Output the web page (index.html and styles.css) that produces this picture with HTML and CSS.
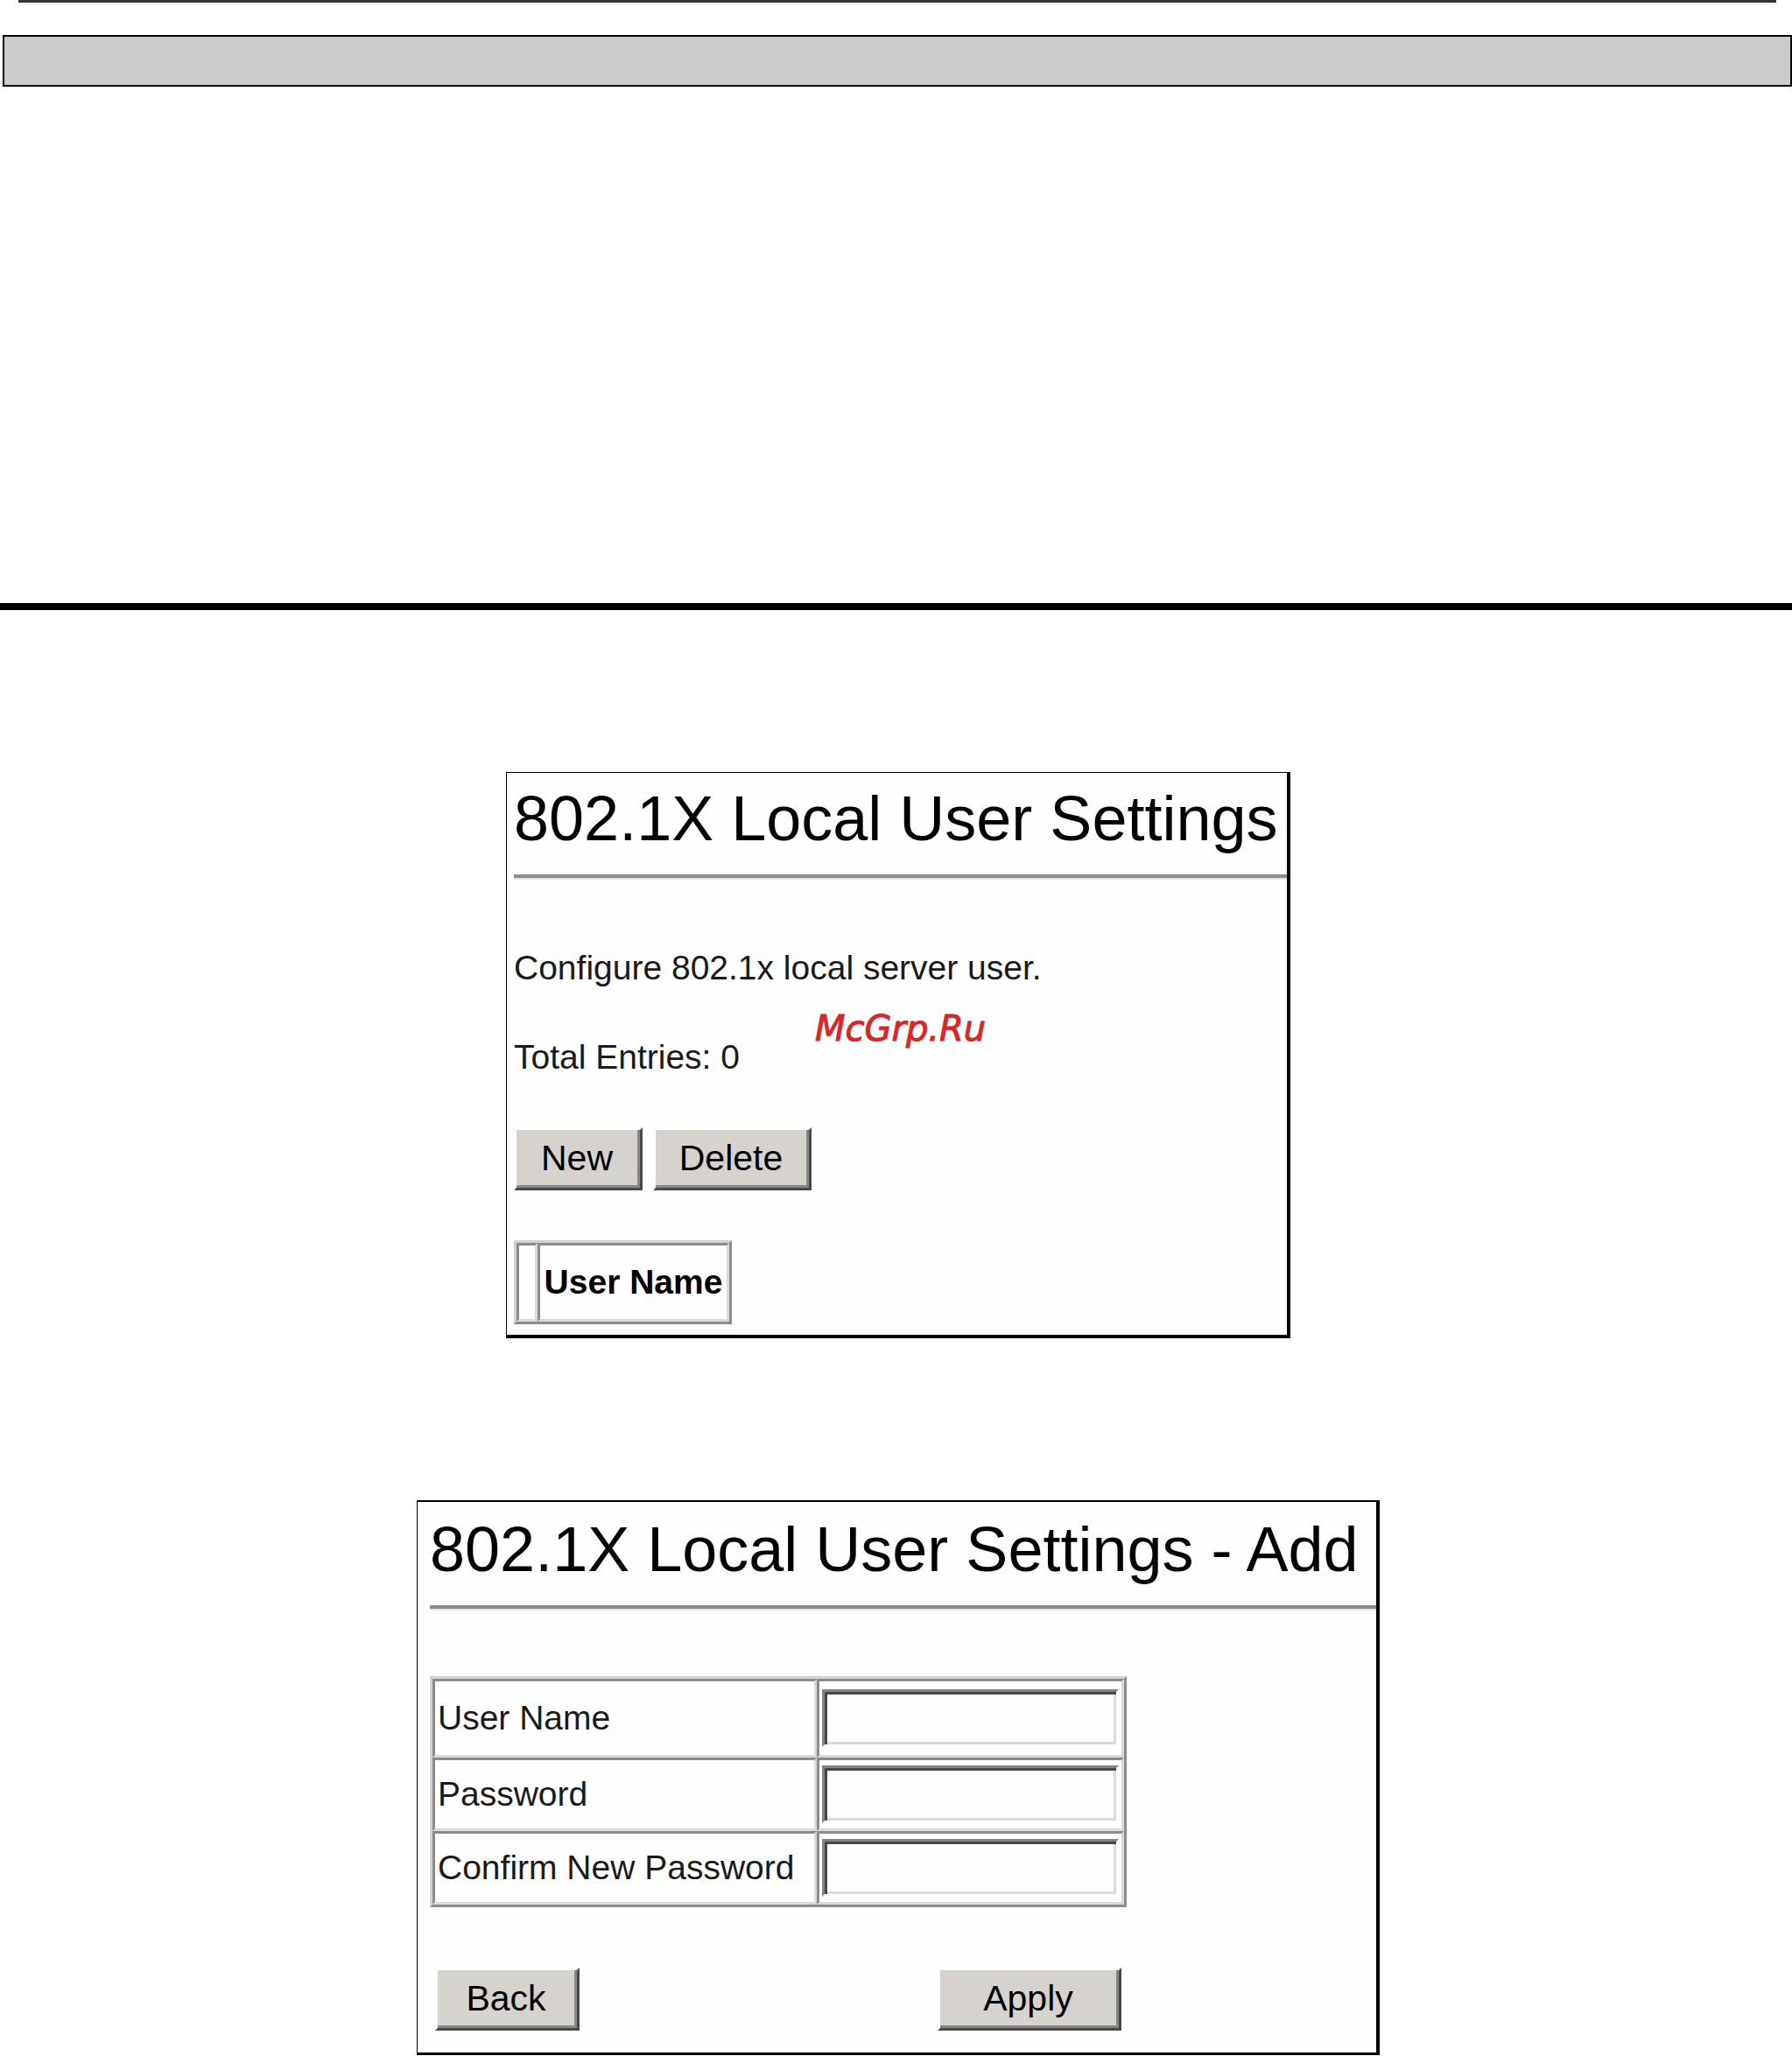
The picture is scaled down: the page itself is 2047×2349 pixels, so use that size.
FILE: index.html
```html
<!DOCTYPE html>
<html lang="en">
<head>
  <meta charset="utf-8">
  <title>802.1X Local User Settings</title>
  <link rel="stylesheet" href="styles.css">
</head>
<body>
  <header class="page-head">
    <div class="top-line"></div>
    <div class="title-bar"></div>
  </header>
  <div class="section-rule"></div>
  <main class="content">
    <section class="panel panel-list">
      <h1 class="panel-title">802.1X Local User Settings</h1>
      <hr class="divider">
      <p class="intro">Configure 802.1x local server user.</p>
      <p class="total">Total Entries: 0</p>
      <div class="actions">
        <button class="btn btn-new" type="button">New</button>
        <button class="btn btn-delete" type="button">Delete</button>
      </div>
      <table class="grid user-list">
        <tr>
          <td class="select-col"></td>
          <th class="name-col" scope="col">User Name</th>
        </tr>
      </table>
      <span class="watermark">McGrp.Ru</span>
    </section>

    <form class="panel panel-add">
      <h1 class="panel-title">802.1X Local User Settings - Add</h1>
      <hr class="divider">
      <table class="grid user-form">
        <tr class="first-row">
          <td class="label-col"><label for="user-name">User Name</label></td>
          <td class="field-col"><input class="field" id="user-name" type="text"></td>
        </tr>
        <tr>
          <td class="label-col"><label for="password">Password</label></td>
          <td class="field-col"><input class="field" id="password" type="password"></td>
        </tr>
        <tr>
          <td class="label-col"><label for="confirm">Confirm New Password</label></td>
          <td class="field-col"><input class="field" id="confirm" type="password"></td>
        </tr>
      </table>
      <div class="form-actions">
        <button class="btn btn-back" type="button">Back</button>
        <button class="btn btn-apply" type="submit">Apply</button>
      </div>
    </form>
  </main>
</body>
</html>
```
FILE: styles.css
```css
* {
  box-sizing: border-box;
}

body {
  margin: 0;
  background: #fff;
  color: #1a1a1a;
  font-family: "Liberation Sans", Arial, sans-serif;
  font-size: 39px;
  line-height: 44px;
}

.top-line {
  height: 3px;
  margin: 0 18px 0 21px;
  background: #373435;
}

.title-bar {
  height: 59px;
  margin: 37px 0 0 3px;
  border: 2px solid #000;
  background: #ccc;
}

.section-rule {
  height: 8px;
  margin-top: 590px;
  background: #000;
}

.content {
  display: flex;
  flex-direction: column;
  align-items: center;
  gap: 185px;
  padding: 185px 0 0 5px;
}

/* Panels */

.panel {
  position: relative;
  width: 100%;
  border: 1px solid #000;
  border-right-width: 4px;
  background: #fefefe;
}

.panel-list {
  max-width: 896px;
  padding: 12px 0 12px 8px;
  border-bottom-width: 4px;
}

.panel-add {
  max-width: 1100px;
  padding: 14px 0 25px 14px;
  border-top-width: 2px;
  border-bottom-width: 3px;
}

.panel-title {
  margin: 0;
  color: #000;
  font-size: 72px;
  font-weight: 400;
  line-height: 80px;
}

.divider {
  height: 6px;
  margin: 24px 0 0;
  border: 0;
  border-top: 4px solid #8c8a8c;
  border-bottom: 2px solid #e8e4e0;
}

.intro {
  margin: 79px 0 58px;
}

.total {
  margin: 0 0 58px;
}

.watermark {
  position: absolute;
  top: 270px;
  left: 352px;
  color: #d62627;
  font-family: "DejaVu Sans", Verdana, sans-serif;
  font-size: 40px;
  font-style: italic;
  -webkit-text-stroke: 1px #d62627;
}

/* Buttons */

.actions {
  display: flex;
  gap: 12px;
  margin-bottom: 57px;
}

.form-actions {
  display: flex;
  justify-content: space-between;
  max-width: 790px;
  margin-top: 69px;
  padding-left: 6px;
}

.btn {
  height: 72px;
  padding: 0 3px 3px 0;
  border: 3px solid;
  border-color: #fefefe #484848 #484848 #fefefe;
  background: #d6d3ce;
  box-shadow: inset -3px -3px #868686;
  color: #000;
  font-family: inherit;
  font-size: 41px;
  line-height: 44px;
}

.btn-new {
  width: 147px;
}

.btn-delete {
  width: 181px;
}

.btn-back {
  width: 165px;
}

.btn-apply {
  width: 210px;
}

/* Bevelled tables */

.grid {
  border: 3px solid;
  border-color: #d6d3ce #8c8c8c #8c8c8c #d6d3ce;
  border-spacing: 0;
}

.grid td,
.grid th {
  padding: 6px 3px;
  border: 3px solid;
  border-color: #8c8c8c #dcdad6 #dcdad6 #8c8c8c;
}

.select-col {
  width: 24px;
}

.name-col {
  width: 219px;
  height: 90px;
  color: #000;
}

.user-form {
  margin-top: 75px;
}

.label-col {
  width: 439px;
}

.field-col {
  width: 351px;
}

.grid .first-row td {
  padding-top: 9px;
  padding-bottom: 9px;
}

.field {
  display: block;
  width: 100%;
  height: 66px;
  padding: 0 9px;
  border: 3px solid;
  border-color: #848484 #fefefe #fefefe #848484;
  border-radius: 0;
  outline: 0;
  background: #fefefe;
  box-shadow: inset 3px 3px #484848, inset -3px -3px #dcdad6;
  font: inherit;
}
```
